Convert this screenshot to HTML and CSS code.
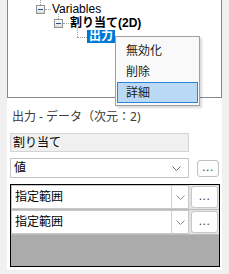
FILE: index.html
```html
<!DOCTYPE html>
<html>
<head>
<meta charset="utf-8">
<link rel="stylesheet" href="styles.css">
</head>
<body>
<div class="panel">
  <div class="tree">
    <div class="row r1"><span class="exp top"></span><span class="hline"></span><span class="lbl">Variables</span></div>
    <div class="row r2"><span class="exp up"></span><span class="hline"></span><span class="lbl bold">割り当て(2D)</span></div>
    <div class="row r3"><span class="elbow"></span><span class="lbl bold sel">出力</span></div>
  </div>
  <div class="menu">
    <div class="item">無効化</div>
    <div class="item">削除</div>
    <div class="item hot">詳細</div>
  </div>
  <div class="form">
    <div class="caption">出力 - データ（次元：2)</div>
    <div class="textbox">割り当て</div>
    <div class="line">
      <div class="combo"><span class="ctext">値</span><svg class="chev" width="9" height="5" viewBox="0 0 9 5"><polyline points="0.5,0.5 4.5,4.5 8.5,0.5" fill="none" stroke="#6b6b6b" stroke-width="1"/></svg></div>
      <div class="dotbtn">...</div>
    </div>
    <div class="grid">
      <div class="grow">
        <div class="gcombo"><span class="gtext">指定範囲</span><span class="gchev"><svg width="9" height="5" viewBox="0 0 9 5"><polyline points="0.5,0.5 4.5,4.5 8.5,0.5" fill="none" stroke="#8a8a8a" stroke-width="1"/></svg></span></div>
        <div class="gcell"><div class="gbtn">...</div></div>
      </div>
      <div class="grow">
        <div class="gcombo"><span class="gtext">指定範囲</span><span class="gchev"><svg width="9" height="5" viewBox="0 0 9 5"><polyline points="0.5,0.5 4.5,4.5 8.5,0.5" fill="none" stroke="#8a8a8a" stroke-width="1"/></svg></span></div>
        <div class="gcell"><div class="gbtn">...</div></div>
      </div>
    </div>
  </div>
</div>
</body>
</html>
```
FILE: styles.css
```css
* { box-sizing: border-box; }
html, body { margin: 0; padding: 0; }
body {
  background: #f0f0f0;
  width: 229px;
  height: 274px;
  overflow: hidden;
  font-family: "Noto Sans", "Noto Sans CJK JP", sans-serif;
  font-size: 12px;
  color: #000;
}
.panel {
  position: relative;
  margin-left: 7px;
  width: 215px;
  height: 270px;
  background: #fff;
}
.tree {
  height: 98px;
  border: 1px solid #828790;
  border-top: none;
  padding-top: 2px;
  font-family: "Liberation Sans", "Noto Sans CJK JP", sans-serif;
}
.row {
  display: flex;
  align-items: center;
  height: 14px;
  line-height: 14px;
  white-space: nowrap;
}
.r1 { padding-left: 28px; }
.r2 { padding-left: 46px; }
.r3 { padding-left: 65px; margin-top: -1px; }
.exp {
  position: relative;
  width: 9px;
  height: 9px;
  border: 1px solid #919191;
  background: linear-gradient(#ffffff, #dcdcdc);
  flex: none;
}
.exp::after {
  content: "";
  position: absolute;
  left: 1px;
  top: 3px;
  width: 5px;
  height: 1px;
  background: #2b50a0;
}
.exp::before {
  content: "";
  position: absolute;
  left: 3px;
  top: -6px;
  height: 5px;
  border-left: 1px dotted #a0a0a0;
}
.hline {
  width: 6px;
  border-top: 1px dotted #a0a0a0;
  flex: none;
}
.lbl { margin-left: 1px; }
.bold { font-weight: bold; }
.sel {
  background: #0078d7;
  color: #fff;
  padding: 0 2px;
  height: 13px;
  line-height: 13px;
  margin-left: 0;
}
.elbow {
  position: relative;
  width: 14px;
  height: 13px;
  flex: none;
}
.elbow::before {
  content: "";
  position: absolute;
  left: 4px;
  top: -2px;
  height: 9px;
  border-left: 1px dotted #a0a0a0;
}
.elbow::after {
  content: "";
  position: absolute;
  left: 4px;
  top: 7px;
  width: 10px;
  border-top: 1px dotted #a0a0a0;
}
.menu {
  position: absolute;
  left: 108px;
  top: 36px;
  width: 85px;
  height: 70px;
  background: #f9f9f9;
  border: 1px solid #a0a0a0;
  padding: 3px 1px 2px 1px;
  box-shadow: 2px 2px 2px rgba(0,0,0,0.15);
}
.item {
  height: 21px;
  line-height: 19px;
  padding-left: 8px;
  border: 1px solid transparent;
  color: #1a1a1a;
}
.item.hot {
  background: #b9d9f5;
  border-color: #2a84d8;
}
.form {
  padding: 11px 0 0 3px;
}
.caption {
  padding-left: 2px;
  height: 16px;
  line-height: 16px;
  color: #3c3c3c;
  white-space: nowrap;
}
.textbox {
  margin-top: 8px;
  width: 179px;
  height: 19px;
  line-height: 17px;
  background: #f0f0f0;
  border: 1px solid #d4d4d4;
  padding-left: 2px;
}
.line {
  margin-top: 6px;
  display: flex;
  align-items: center;
}
.combo {
  width: 179px;
  height: 20px;
  border: 1px solid #c4c4c4;
  background: #fff;
  display: flex;
  align-items: center;
  justify-content: space-between;
  padding: 0 7px 0 3px;
}
.ctext { line-height: 18px; }
.chev { display: block; }
.dotbtn {
  margin-left: 8px;
  width: 22px;
  height: 17px;
  border: 1px solid #c0c0c0;
  border-radius: 3px;
  background: #fdfdfd;
  text-align: center;
  line-height: 13px;
  color: #4a3a1a;
  letter-spacing: 0.5px;
  font-family: "Liberation Sans", sans-serif;
}
.grid {
  margin-top: 6px;
  width: 210px;
  height: 83px;
  border: 1px solid #000;
  background: #ababab;
}
.grow {
  display: flex;
  height: 25px;
  border-bottom: 1px solid #bcbcbc;
  background: #e3e3e3;
}
.gcombo {
  width: 178px;
  display: flex;
  background: #fff;
  border: 1px solid #c8c8c8;
}
.gtext {
  flex: 1;
  padding-left: 3px;
  line-height: 22px;
}
.gchev {
  width: 17px;
  border-left: 1px solid #d0d0d0;
  display: flex;
  align-items: center;
  justify-content: center;
}
.gcell {
  flex: 1;
  padding: 1px 1px 1px 2px;
}
.gbtn {
  height: 22px;
  border: 1px solid #c8c8c8;
  border-radius: 3px;
  background: #fff;
  text-align: center;
  line-height: 18px;
  color: #4a3a1a;
  letter-spacing: 0.5px;
  font-family: "Liberation Sans", sans-serif;
}
```
